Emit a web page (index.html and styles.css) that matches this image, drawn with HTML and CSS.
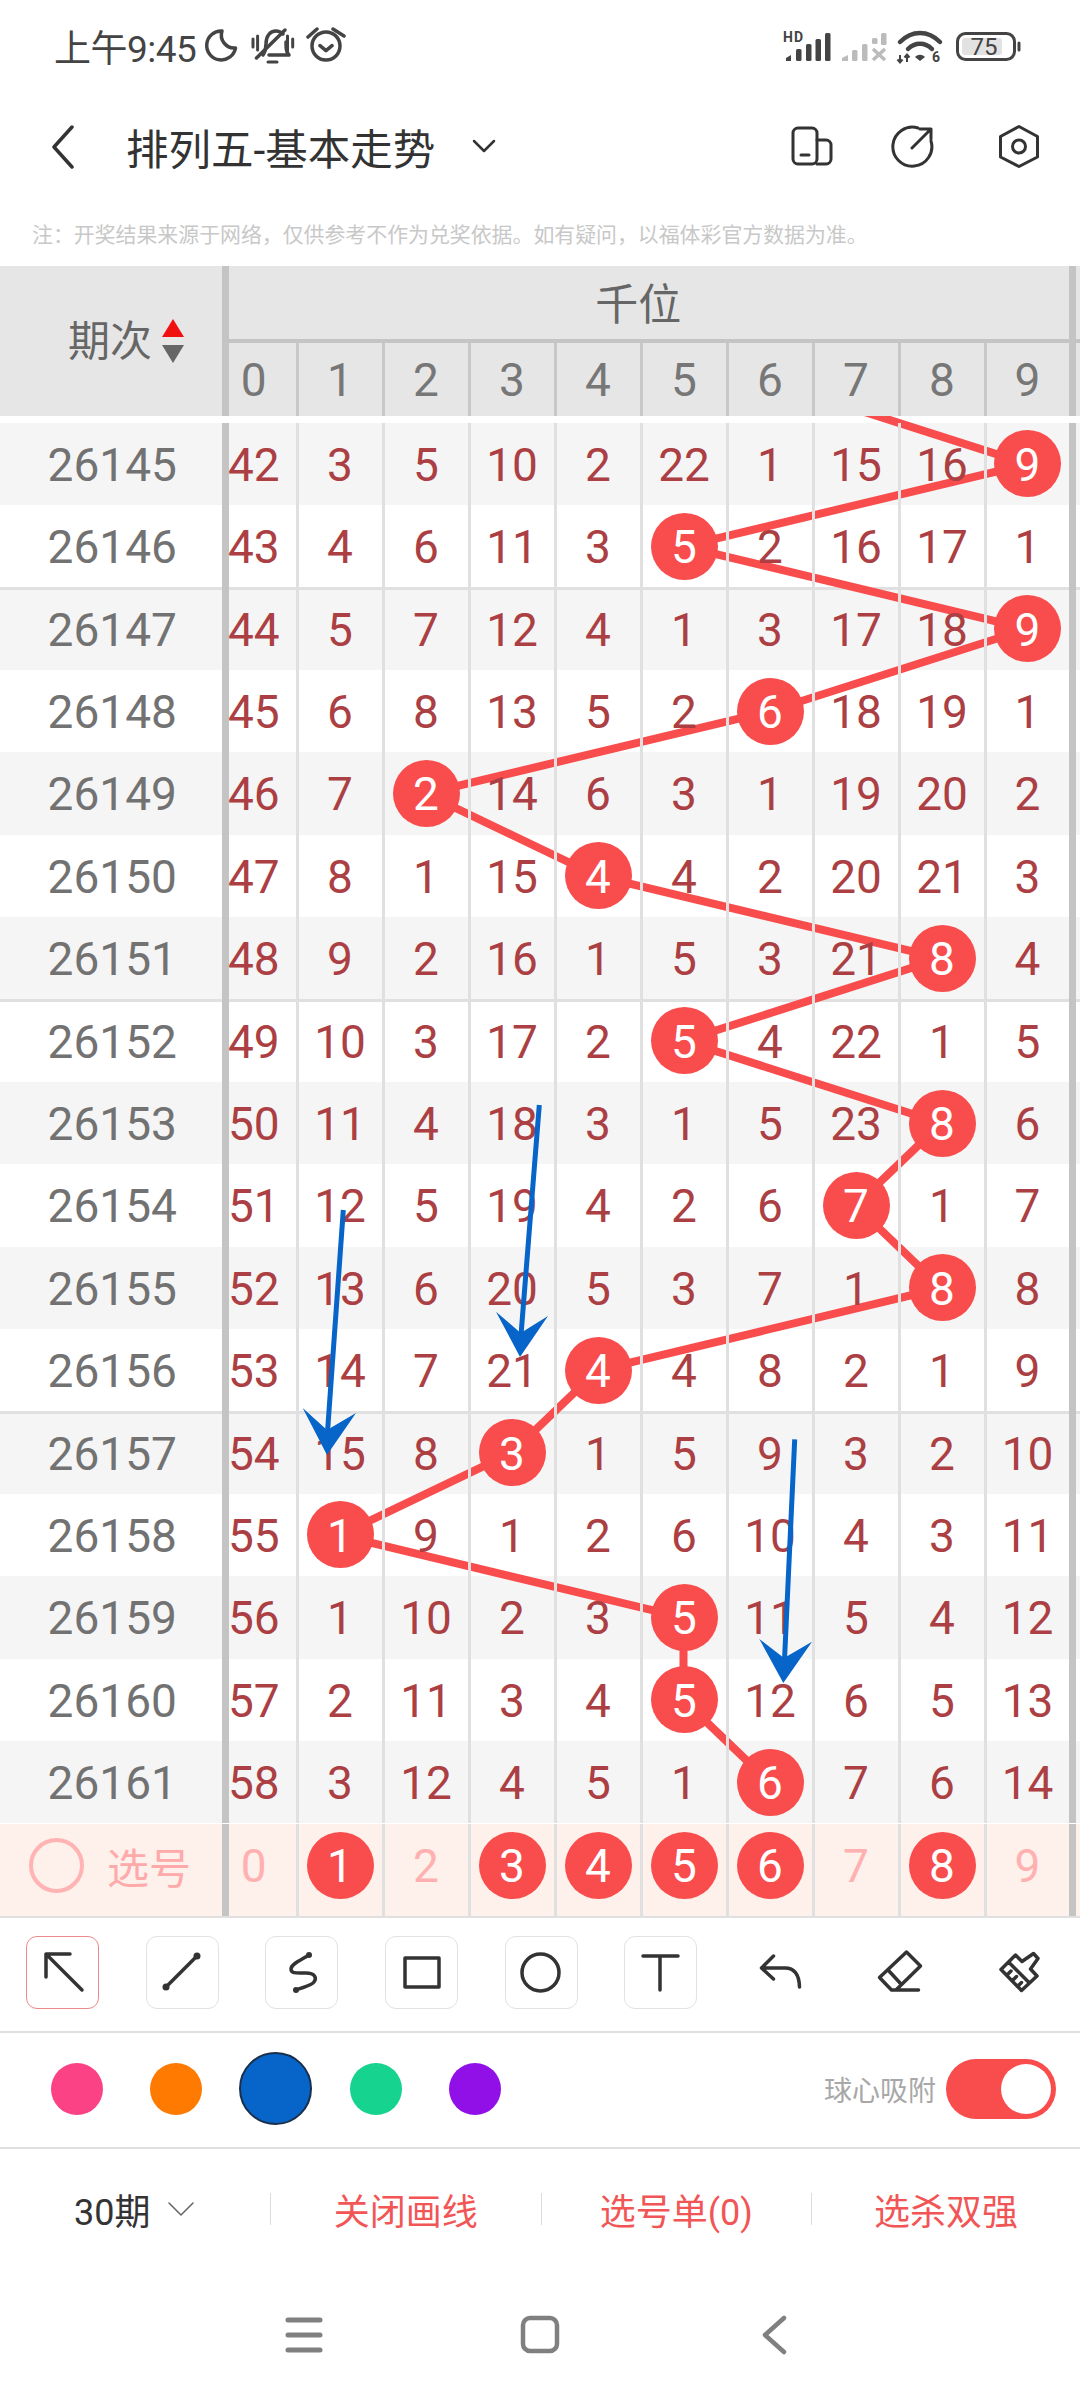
FILE: index.html
```html
<!DOCTYPE html>
<html lang="zh-CN">
<head>
    <meta charset="UTF-8">
    <meta name="viewport" content="width=device-width, initial-scale=1.0">
    <title>排列五-基本走势</title>
    <link rel="stylesheet" href="styles.css">
</head>
<body>
    <!-- Status bar -->
    <div class="status">
        <span class="time">上午9:45</span>
        <svg class="st-left" width="150" height="40" viewBox="0 0 150 40" fill="none" stroke="#444" stroke-width="3.5" stroke-linecap="round" stroke-linejoin="round">
            <path d="M20 4A14.5 14.5 0 1 0 33.5 21 13 13 0 0 1 20 4Z"/>
            <path d="M51 12v8M55.6 9v14M85.5 9v14M90.7 12v8" stroke-width="3"/>
            <path d="M61 28c2-3 3-6 3-11 0-8 4-13 10-13 3 0 5 1 7 3M84 15c0 6 0 10 3 13H67"/>
            <path d="M83 3 54.5 31"/>
            <path d="M66 35h9" stroke-width="3"/>
            <circle cx="124" cy="19" r="14"/>
            <path d="M118 18.7l6 5 6-5M106 10l9-8M131 2l11 7"/>
        </svg>
        <svg class="st-right" width="242" height="40" viewBox="780 28 242 40" fill="none">
            <text class="st-hd" x="783" y="42">HD</text>
            <g fill="#444">
                <path d="M786 61v-3l5-3v6z"/>
                <rect x="796" y="49" width="5.5" height="12" rx="1.5"/>
                <rect x="806" y="44" width="5.5" height="17" rx="1.5"/>
                <rect x="815.5" y="39" width="5.5" height="22" rx="1.5"/>
                <rect x="825" y="33" width="5.5" height="28" rx="1.5"/>
            </g>
            <g fill="#bbb">
                <path d="M842 61v-3l6-3v6z"/>
                <rect x="852" y="50" width="5.5" height="11" rx="1.5"/>
                <rect x="862" y="44" width="5.5" height="17" rx="1.5"/>
                <rect x="872" y="38" width="5.5" height="6" rx="1.5"/>
                <rect x="881" y="33" width="5.5" height="12" rx="1.5"/>
            </g>
            <path d="M873 49l12 11M885 49l-12 11" stroke="#bbb" stroke-width="3.5"/>
            <g stroke="#444" stroke-width="4.5" stroke-linecap="round">
                <path d="M900 42c12-12 28-12 40 0"/>
                <path d="M908 49c7-7 17-7 24 0"/>
            </g>
            <path d="M915 57c3-3 7-3 10 0l-5 4z" fill="#444"/>
            <path d="M900 55v7M897.5 59.5l2.5 3 2.5-3M907 62v-7M904.5 57.5l2.5-3 2.5 3" stroke="#444" stroke-width="2"/>
            <text class="st-six" x="932" y="62">6</text>
            <rect x="957.5" y="33.5" width="57" height="26" rx="8" stroke="#444" stroke-width="3"/>
            <rect x="962" y="38" width="40" height="17" rx="3" fill="#e2e2e2"/>
            <text class="st-batt" x="984" y="55" text-anchor="middle">75</text>
            <rect x="1017.5" y="41.5" width="3" height="10" rx="1.5" fill="#444"/>
        </svg>
    </div>

    <!-- App bar -->
    <div class="appbar">
        <svg class="back" width="24" height="44" viewBox="0 0 24 44" fill="none" stroke="#333" stroke-width="3.5" stroke-linecap="round" stroke-linejoin="round"><path d="M21 2 3 22l18 20"/></svg>
        <span class="title">排列五-基本走势</span>
        <svg class="title-arrow" width="24" height="14" viewBox="0 0 24 14" fill="none" stroke="#333" stroke-width="2.5" stroke-linecap="round" stroke-linejoin="round"><path d="M2 2l10 10L22 2"/></svg>
        <svg class="bar-icons" width="250" height="46" viewBox="790 125 250 46" fill="none" stroke="#333" stroke-width="3" stroke-linecap="round" stroke-linejoin="round">
            <rect x="793" y="129" width="24" height="36" rx="5"/>
            <path d="M817 141h9a5 5 0 0 1 5 5v14a5 5 0 0 1-5 5h-9M801 156h8"/>
            <path d="M918 129A19.5 19.5 0 1 0 931 142M912 149l19-19M920 130h11v10"/>
            <path d="M1019 127.5l18.5 10v20.500l-18.5 9.5-18.5-9.5v-20.500z"/>
            <circle cx="1019" cy="147.5" r="6.5"/>
        </svg>
    </div>

    <p class="note">注：开奖结果来源于网络，仅供参考不作为兑奖依据。如有疑问，以福体彩官方数据为准。</p>

    <!-- Table head -->
    <div class="head">
        <div class="head-period">
            <span>期次</span>
            <div class="sort"><i class="sort-up"></i><i class="sort-down"></i></div>
        </div>
        <div class="head-main">
            <div class="head-title">千位</div>
            <div class="head-digits">
                <span>0</span><span>1</span><span>2</span><span>3</span><span>4</span><span>5</span><span>6</span><span>7</span><span>8</span><span>9</span>
            </div>
        </div>
    </div>

    <!-- Chart -->
    <div class="chart">
        <svg class="lines" viewBox="0 416 1080 1408"><polyline points="769.5,381.6 1027.5,464 683.5,546.4 1027.5,628.8 769.5,711.2 425.5,793.6 597.5,876 941.5,958.4 683.5,1040.8 941.5,1123.2 855.5,1205.6 941.5,1288 597.5,1370.4 511.5,1452.8 339.5,1535.2 683.5,1617.6 683.5,1700 769.5,1782.4"/></svg>

        <div class="row"><div class="period">26145</div><span>42</span><span>3</span><span>5</span><span>10</span><span>2</span><span>22</span><span>1</span><span>15</span><span>16</span><span><b>9</b></span></div>
        <div class="row"><div class="period">26146</div><span>43</span><span>4</span><span>6</span><span>11</span><span>3</span><span><b>5</b></span><span>2</span><span>16</span><span>17</span><span>1</span></div>
        <div class="row mark"><div class="period">26147</div><span>44</span><span>5</span><span>7</span><span>12</span><span>4</span><span>1</span><span>3</span><span>17</span><span>18</span><span><b>9</b></span></div>
        <div class="row"><div class="period">26148</div><span>45</span><span>6</span><span>8</span><span>13</span><span>5</span><span>2</span><span><b>6</b></span><span>18</span><span>19</span><span>1</span></div>
        <div class="row"><div class="period">26149</div><span>46</span><span>7</span><span><b>2</b></span><span>14</span><span>6</span><span>3</span><span>1</span><span>19</span><span>20</span><span>2</span></div>
        <div class="row"><div class="period">26150</div><span>47</span><span>8</span><span>1</span><span>15</span><span><b>4</b></span><span>4</span><span>2</span><span>20</span><span>21</span><span>3</span></div>
        <div class="row"><div class="period">26151</div><span>48</span><span>9</span><span>2</span><span>16</span><span>1</span><span>5</span><span>3</span><span>21</span><span><b>8</b></span><span>4</span></div>
        <div class="row mark"><div class="period">26152</div><span>49</span><span>10</span><span>3</span><span>17</span><span>2</span><span><b>5</b></span><span>4</span><span>22</span><span>1</span><span>5</span></div>
        <div class="row"><div class="period">26153</div><span>50</span><span>11</span><span>4</span><span>18</span><span>3</span><span>1</span><span>5</span><span>23</span><span><b>8</b></span><span>6</span></div>
        <div class="row"><div class="period">26154</div><span>51</span><span>12</span><span>5</span><span>19</span><span>4</span><span>2</span><span>6</span><span><b>7</b></span><span>1</span><span>7</span></div>
        <div class="row"><div class="period">26155</div><span>52</span><span>13</span><span>6</span><span>20</span><span>5</span><span>3</span><span>7</span><span>1</span><span><b>8</b></span><span>8</span></div>
        <div class="row"><div class="period">26156</div><span>53</span><span>14</span><span>7</span><span>21</span><span><b>4</b></span><span>4</span><span>8</span><span>2</span><span>1</span><span>9</span></div>
        <div class="row mark"><div class="period">26157</div><span>54</span><span>15</span><span>8</span><span><b>3</b></span><span>1</span><span>5</span><span>9</span><span>3</span><span>2</span><span>10</span></div>
        <div class="row"><div class="period">26158</div><span>55</span><span><b>1</b></span><span>9</span><span>1</span><span>2</span><span>6</span><span>10</span><span>4</span><span>3</span><span>11</span></div>
        <div class="row"><div class="period">26159</div><span>56</span><span>1</span><span>10</span><span>2</span><span>3</span><span><b>5</b></span><span>11</span><span>5</span><span>4</span><span>12</span></div>
        <div class="row"><div class="period">26160</div><span>57</span><span>2</span><span>11</span><span>3</span><span>4</span><span><b>5</b></span><span>12</span><span>6</span><span>5</span><span>13</span></div>
        <div class="row"><div class="period">26161</div><span>58</span><span>3</span><span>12</span><span>4</span><span>5</span><span>1</span><span><b>6</b></span><span>7</span><span>6</span><span>14</span></div>

        <!-- Hand drawn arrows -->
        <svg class="arrows" viewBox="0 416 1080 1408">
            <path class="shaft" d="M539.3 1105 521 1335M343.3 1210 327.5 1432M794.7 1439.3 784.5 1660"/>
            <path d="M520 1357 496 1311.7 520.7 1333 548 1316z"/>
            <path d="M327 1455 302.7 1408 327 1430 356 1413z"/>
            <path d="M783.3 1683 759.3 1639 784 1658 812 1641.7z"/>
        </svg>
    </div>

    <!-- Pick row -->
    <div class="row pick">
        <div class="pick-label"><i class="ring"></i>选号</div>
        <span>0</span><span><b>1</b></span><span>2</span><span><b>3</b></span><span><b>4</b></span><span><b>5</b></span><span><b>6</b></span><span>7</span><span><b>8</b></span><span>9</span>
    </div>

    <!-- Drawing tools -->
    <div class="tools">
        <div class="tool tool-on"><svg viewBox="0 0 73 73"><path d="M44 18H20V41M20 18 56 54"/></svg></div>
        <div class="tool"><svg viewBox="0 0 73 73"><path d="M52 20 21 51"/><circle class="dot" cx="52" cy="20" r="3.5"/><circle class="dot" cx="21" cy="51" r="3.5"/></svg></div>
        <div class="tool"><svg viewBox="0 0 73 73"><path d="M44 19C36 24 26 28 26 33 26 38 32 37 41 37 50 37 52 42 49 46 46 50 38 51 31 54"/><circle class="dot" cx="44" cy="19" r="3"/><circle class="dot" cx="31" cy="54" r="3"/></svg></div>
        <div class="tool"><svg viewBox="0 0 73 73"><path d="M20 22H54V51H20Z"/></svg></div>
        <div class="tool"><svg viewBox="0 0 73 73"><circle cx="36.5" cy="36.5" r="18.5"/></svg></div>
        <div class="tool"><svg viewBox="0 0 73 73"><path d="M19 20H54M36 20V54"/></svg></div>
        <div class="tool tool-plain"><svg viewBox="0 0 73 73"><path d="M29.5 20 17.5 32 29.5 43M17.5 32H41Q55 32 55.5 51"/></svg></div>
        <div class="tool tool-plain"><svg viewBox="0 0 73 73"><path d="M43.5 16 57.5 30 33 54 28.5 54 16.5 41.5ZM25.5 34.5 38 48M28.5 54H55.5"/></svg></div>
        <div class="tool tool-plain"><svg viewBox="0 0 73 73"><path d="M32.5 19 39 25.5 50.5 17.5 55 22.5 47.5 33 54 40 38.5 54.5 18 33.5ZM25.5 26 46.5 47M24 39l4-4M29.5 44.5l4-4M35 50l3.5-3.5"/></svg></div>
    </div>

    <!-- Colours -->
    <div class="colors">
        <div class="swatch"><i class="c-pink"></i></div>
        <div class="swatch"><i class="c-orange"></i></div>
        <div class="swatch"><i class="c-blue"></i></div>
        <div class="swatch"><i class="c-green"></i></div>
        <div class="swatch"><i class="c-purple"></i></div>
        <span class="snap-label">球心吸附</span>
        <div class="toggle"><i></i></div>
    </div>

    <!-- Bottom actions -->
    <div class="actions">
        <div class="action action-period">30期
            <svg width="26" height="16" viewBox="0 0 26 16" fill="none" stroke="#666" stroke-width="1.5" stroke-linecap="round" stroke-linejoin="round"><path d="M1 2l12 12L25 2"/></svg>
        </div>
        <div class="action">关闭画线</div>
        <div class="action">选号单(0)</div>
        <div class="action">选杀双强</div>
    </div>

    <!-- Navigation -->
    <div class="nav">
        <svg width="504" height="40" viewBox="284 2315 504 40" fill="none" stroke="#808080" stroke-linecap="round" stroke-linejoin="round">
            <path d="M288 2320h32M288 2335h32M288 2350h32" stroke-width="5"/>
            <rect x="523" y="2318" width="34" height="33" rx="7" stroke-width="4.5"/>
            <path d="M784 2318 765 2335 784 2352" stroke-width="4.5"/>
        </svg>
    </div>
</body>
</html>
```

FILE: styles.css
```css
* {
    box-sizing: border-box;
}

body {
    margin: 0;
    width: 1080px;
    height: 2400px;
    overflow: hidden;
    background-color: white;
    color: #333;
    font-family: Roboto, "Noto Sans CJK SC", sans-serif;
}

/* Status bar */
.status {
    display: flex;
    align-items: center;
    height: 92px;
    padding-left: 54px;
}

.time {
    width: 148px;
    font-size: 37px;
    letter-spacing: -0.5px;
    color: #444;
    white-space: nowrap;
}

.st-left {
    margin-top: 2px;
}

.st-right {
    margin-left: auto;
    margin-right: 58px;
    margin-top: 4px;
}

.st-hd {
    font-size: 14px;
    font-weight: 700;
    letter-spacing: 1px;
    fill: #444;
}

.st-six {
    font-size: 14px;
    font-weight: 700;
    fill: #444;
}

.st-batt {
    font-size: 24px;
    fill: #444;
}

/* App bar */
.appbar {
    display: flex;
    align-items: center;
    height: 110px;
    padding-left: 51px;
}

.title {
    margin-left: 51px;
    margin-top: -2px;
    font-size: 42.5px;
    color: #333;
    white-space: nowrap;
}

.title-arrow {
    margin-left: 37px;
    margin-top: -2px;
}

.bar-icons {
    margin-left: auto;
    margin-right: 40px;
}

.note {
    margin: 0;
    height: 64px;
    padding-left: 32px;
    padding-top: 17px;
    font-size: 20.9px;
    line-height: 32px;
    color: #c8c8c8;
    white-space: nowrap;
}

/* Table head */
.head {
    display: flex;
    height: 150px;
    background-color: #e6e6e6;
    color: #666;
}

.head-period {
    display: flex;
    align-items: center;
    gap: 10px;
    width: 228.5px;
    padding-left: 68px;
    border-right: 7.5px solid #c4c4c4;
    font-size: 42px;
    flex: none;
}

.head-period span {
    margin-top: -7px;
}

.sort {
    display: flex;
    flex-direction: column;
    gap: 8px;
}

.sort i {
    display: block;
    width: 0;
    height: 0;
    border-left: 11px solid transparent;
    border-right: 11px solid transparent;
}

.sort-up {
    border-bottom: 18px solid #f01010;
}

.sort-down {
    border-top: 18px solid #666;
}

.head-main {
    flex: 1;
}

.head-title {
    position: relative;
    display: flex;
    align-items: center;
    justify-content: center;
    height: 73px;
    padding-right: 32px;
    padding-bottom: 3px;
    font-size: 43px;
}

.head-title::after {
    content: "";
    position: absolute;
    right: 4.5px;
    top: 0;
    bottom: 0;
    width: 7px;
    background-color: #c4c4c4;
}

.head-digits {
    display: grid;
    grid-template-columns: 70px repeat(8, 86px) 89px 1fr;
    height: 77px;
    border-top: 4px solid #c4c4c4;
    font-size: 46px;
    color: #777;
}

.head-digits span {
    display: flex;
    align-items: center;
    justify-content: center;
    border-right: 3.5px solid #c8c8c8;
}

.head-digits span:first-child {
    padding-right: 16.5px;
}

.head-digits span:last-child {
    border-right: 7px solid #c4c4c4;
}

/* Chart */
.chart {
    position: relative;
    height: 1407.5px;
    padding-top: 6.7px;
    overflow: hidden;
}

.lines, .arrows {
    position: absolute;
    left: 0;
    top: 0;
    width: 1080px;
    height: 1408px;
}

.lines {
    z-index: 0;
}

.lines polyline {
    fill: none;
    stroke: #f94c4c;
    stroke-width: 8px;
}

.arrows {
    z-index: 3;
    fill: #0764c8;
}

.arrows .shaft {
    fill: none;
    stroke: #0764c8;
    stroke-width: 5px;
}

.row {
    display: grid;
    grid-template-columns: 228.5px 70px repeat(8, 86px) 89px 1fr;
    height: 82.4px;
    font-size: 46px;
    color: #ab3f43;
}

.row:nth-child(even) {
    background-color: #f5f5f5;
}

.row.mark {
    box-shadow: inset 0 3px 0 #e0e0e0;
}

.period {
    display: flex;
    align-items: center;
    justify-content: center;
    padding-left: 3px;
    padding-top: 2px;
    border-right: 7.5px solid #c4c4c4;
    color: #727272;
}

.row span {
    position: relative;
    z-index: 1;
    display: flex;
    align-items: center;
    justify-content: center;
    padding-top: 2px;
    border-right: 3.5px solid #e0e0e0;
}

.row span:first-of-type {
    padding-right: 16.5px;
}

.row span:last-of-type {
    border-right: 7px solid #c4c4c4;
}

.row b {
    display: flex;
    align-items: center;
    justify-content: center;
    flex: none;
    width: 67px;
    height: 67px;
    margin-top: -2px;
    padding-top: 2px;
    border-radius: 50%;
    background-color: #f94c4c;
    color: white;
    font-weight: 400;
}

/* Pick row */
.pick.row {
    height: 94px;
    padding-bottom: 9px;
    background-color: #fef0ea;
    border-bottom: 2.5px solid #e0e0e0;
    color: #ffb0b0;
}

/* the column rules run the full height of the row */
.pick.row > * {
    margin-bottom: -9px;
    padding-bottom: 9px;
}

.pick-label {
    display: flex;
    align-items: center;
    gap: 23px;
    padding-left: 29px;
    border-right: 7.5px solid #c4c4c4;
    font-size: 42px;
    color: #ffaaaa;
}

.ring {
    width: 55px;
    height: 55px;
    border: 4px solid #ffb3b3;
    border-radius: 50%;
    flex: none;
}

/* Drawing tools */
.tools {
    display: grid;
    grid-template-columns: repeat(9, 119.6px);
    align-items: center;
    justify-items: center;
    height: 115px;
    padding-left: 3px;
    padding-bottom: 3px;
    border-bottom: 2px solid #e0e0e0;
}

.tool {
    width: 73px;
    height: 73px;
    border: 1.5px solid #e2e2e2;
    border-radius: 11px;
}

.tool svg {
    display: block;
    margin: -1.5px;
    width: 73px;
    height: 73px;
    fill: none;
    stroke: #333;
    stroke-width: 3.5px;
    stroke-linecap: round;
    stroke-linejoin: round;
}

.tool svg .dot {
    fill: #333;
    stroke: none;
}

.tool-on {
    border-color: #ec8a8a;
}

.tool-plain {
    border: none;
}

.tool-plain svg {
    margin: 0;
}

/* Colours */
.colors {
    display: flex;
    align-items: center;
    height: 116px;
    padding-left: 27px;
    padding-right: 24px;
    padding-bottom: 2px;
    border-bottom: 2px solid #e0e0e0;
}

.swatch {
    display: flex;
    justify-content: center;
    width: 99.6px;
}

.swatch i {
    display: block;
    width: 52px;
    height: 52px;
    border-radius: 50%;
}

.c-pink {
    background-color: #fb4284;
}

.c-orange {
    background-color: #ff7a00;
}

.swatch .c-blue {
    width: 73px;
    height: 73px;
    background-color: #0764c8;
    border: 2px solid #1a2f4a;
}

.c-green {
    background-color: #16d38f;
}

.c-purple {
    background-color: #9210e8;
}

.snap-label {
    margin-left: auto;
    margin-right: 10px;
    font-size: 28px;
    color: #a8a8a8;
}

.toggle {
    display: flex;
    justify-content: flex-end;
    align-items: center;
    width: 110px;
    height: 60px;
    padding-right: 5px;
    border-radius: 30px;
    background-color: #f94c4c;
}

.toggle i {
    display: block;
    width: 50px;
    height: 50px;
    border-radius: 50%;
    background-color: white;
}

/* Bottom actions */
.actions {
    display: grid;
    grid-template-columns: 271px 270.5px 270.5px 1fr;
    align-items: center;
    height: 122px;
    padding-bottom: 2px;
    font-size: 36px;
    color: #f25555;
}

.action {
    display: flex;
    align-items: center;
    justify-content: center;
    height: 32px;
    border-right: 1.5px solid #dcdcdc;
    white-space: nowrap;
}

.action:last-child {
    border-right: none;
}

.action-period {
    justify-content: flex-start;
    gap: 18px;
    padding-left: 74px;
    color: #333;
}

/* Navigation */
.nav {
    display: flex;
    padding-top: 44px;
    padding-left: 284px;
}
```
